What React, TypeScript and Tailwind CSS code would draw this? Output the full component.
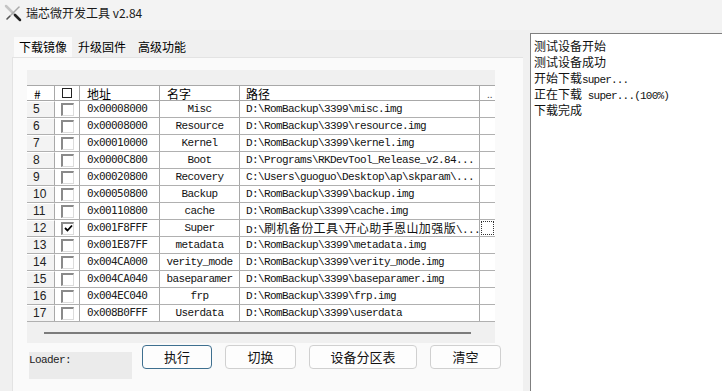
import React from "react";

const cjk = "font-[family-name:'Noto_Sans_CJK_SC',sans-serif]";
const mono = "font-[family-name:'Liberation_Mono','Noto_Sans_CJK_SC',monospace]";
const dmono = "font-[family-name:'DejaVu_Sans_Mono',monospace]";

type Row = { n: string; addr: string; name: string; path: string; checked?: boolean; cjkPath?: boolean; focus?: boolean };

const rows: Row[] = [
  { n: "5", addr: "0x00008000", name: "Misc", path: "D:\\RomBackup\\3399\\misc.img" },
  { n: "6", addr: "0x00008000", name: "Resource", path: "D:\\RomBackup\\3399\\resource.img" },
  { n: "7", addr: "0x00010000", name: "Kernel", path: "D:\\RomBackup\\3399\\kernel.img" },
  { n: "8", addr: "0x0000C800", name: "Boot", path: "D:\\Programs\\RKDevTool_Release_v2.84..." },
  { n: "9", addr: "0x00020800", name: "Recovery", path: "C:\\Users\\guoguo\\Desktop\\ap\\skparam\\..." },
  { n: "10", addr: "0x00050800", name: "Backup", path: "D:\\RomBackup\\3399\\backup.img" },
  { n: "11", addr: "0x00110800", name: "cache", path: "D:\\RomBackup\\3399\\cache.img" },
  { n: "12", addr: "0x001F8FFF", name: "Super", path: "", checked: true, cjkPath: true, focus: true },
  { n: "13", addr: "0x001E87FF", name: "metadata", path: "D:\\RomBackup\\3399\\metadata.img" },
  { n: "14", addr: "0x004CA000", name: "verity_mode", path: "D:\\RomBackup\\3399\\verity_mode.img" },
  { n: "15", addr: "0x004CA040", name: "baseparamer", path: "D:\\RomBackup\\3399\\baseparamer.img" },
  { n: "16", addr: "0x004EC040", name: "frp", path: "D:\\RomBackup\\3399\\frp.img" },
  { n: "17", addr: "0x008B0FFF", name: "Userdata", path: "D:\\RomBackup\\3399\\userdata" },
];

function CheckBox({ checked }: { checked?: boolean }) {
  return (
    <div className="w-[13px] h-[13px] bg-white border-t-2 border-l-2 border-t-[#8a8a8a] border-l-[#8a8a8a] border-b border-r border-b-[#dcdcdc] border-r-[#dcdcdc] flex items-center justify-center">
      {checked && (
        <svg width="9" height="9" viewBox="0 0 9 9">
          <path d="M1 4 L3.5 6.5 L8 1.5" stroke="#000" strokeWidth="1.8" fill="none" />
        </svg>
      )}
    </div>
  );
}

function AppIcon() {
  return (
    <svg width="18" height="18" viewBox="0 0 18 18">
      <path d="M2 2 L14 14" stroke="#c4c4c4" strokeWidth="2.5" strokeLinecap="round" />
      <path d="M15 3 L7 11" stroke="#a8a8a8" strokeWidth="1.5" strokeLinecap="round" />
      <path d="M11 11 L16 16" stroke="#222" strokeWidth="2.5" strokeLinecap="round" />
      <path d="M6 12 L3 15" stroke="#555" strokeWidth="1.6" strokeLinecap="round" />
    </svg>
  );
}

function Btn({ label, w, primary }: { label: string; w: string; primary?: boolean }) {
  return (
    <div
      className={`${w} h-[24px] rounded-[4px] border ${primary ? "border-[#3e6f8f]" : "border-[#d0d0d0]"} bg-[#fdfdfd] flex items-center justify-center text-[13px] text-[#111] ${cjk}`}
    >
      {label}
    </div>
  );
}

export default function App() {
  return (
    <div className="w-[722px] h-[391px] overflow-hidden bg-[#f0f0f0] flex flex-col text-black">
      {/* title bar */}
      <div className="h-[30px] bg-[#f3f3f3] flex items-center pl-[4px] pb-[4px] shrink-0">
        <AppIcon />
        <span className={`ml-[4px] text-[12px] text-[#1a1a1a] ${cjk}`}>瑞芯微开发工具 v2.84</span>
      </div>

      <div className="flex flex-1 min-h-0">
        {/* left area */}
        <div className="w-[530px] shrink-0 flex flex-col pl-[12px] pr-[7px] pt-[7px]">
          {/* tabs */}
          <div className={`flex h-[20px] items-end text-[12px] ${cjk}`}>
            <div className="h-[20px] ml-[2px] w-[58px] bg-[#fafafa] flex items-center justify-center">下载镜像</div>
            <div className="h-[20px] w-[60px] flex items-center justify-center">升级固件</div>
            <div className="h-[20px] w-[60px] flex items-center justify-center">高级功能</div>
          </div>
          {/* tab panel */}
          <div className="flex-1 bg-[#fafafa] border-l border-t border-[#e3e3e3] pl-[14px] pt-[12px] flex flex-col">
            {/* grid */}
            <div className="w-[468px] h-[273px] bg-[#f0f0f0] flex flex-col">
              <div className="h-[15px] shrink-0" />
              {/* header */}
              <div className={`h-[16px] flex bg-white border-t border-b border-[#a8a8a8] text-[12px] leading-[15px] ${cjk}`}>
                <div className="w-[28px] border-r border-[#a8a8a8] pl-[7px]">#</div>
                <div className="w-[25px] border-r border-[#a8a8a8] flex items-center pl-[7px]">
                  <div className="w-[10px] h-[10px] border border-[#222]" />
                </div>
                <div className="w-[80px] border-r border-[#a8a8a8] pl-[7px]">地址</div>
                <div className="w-[80px] border-r border-[#a8a8a8] pl-[7px]">名字</div>
                <div className="w-[240px] border-r border-[#a8a8a8] pl-[6px]">路径</div>
                <div className="w-[15px] pl-[7px] text-[#555] text-[10px]">..</div>
              </div>
              {rows.map((r) => (
                <div key={r.n} className="h-[17px] flex border-b border-[#b0b0b0] bg-white">
                  <div className="w-[28px] bg-[#f3f3f3] border-r border-[#a8a8a8] border-t border-t-white pl-[6px] text-[12px] leading-[15px] text-[#222] font-[family-name:'Liberation_Sans',sans-serif]">
                    {r.n}
                  </div>
                  <div className="w-[25px] border-r border-[#a8a8a8] pl-[6px] flex items-center">
                    <CheckBox checked={r.checked} />
                  </div>
                  <div className={`w-[80px] border-r border-[#a8a8a8] pl-[7px] text-[11px] tracking-[-0.6px] leading-[16px] text-[#222] ${dmono}`}>
                    {r.addr}
                  </div>
                  <div className={`w-[80px] border-r border-[#a8a8a8] text-center text-[11px] tracking-[-0.6px] leading-[16px] text-[#111] ${mono}`}>
                    {r.name}
                  </div>
                  <div className={`w-[240px] border-r border-[#a8a8a8] pl-[6px] text-[11px] tracking-[-0.6px] leading-[16px] text-[#111] whitespace-nowrap overflow-hidden ${mono}`}>
                    {r.cjkPath ? (
                      <span className="leading-[16px]">
                        D:\<span className={`text-[12px] leading-[16px] tracking-[0.4px] ${cjk}`}>刷机备份工具</span>\
                        <span className={`text-[12px] leading-[16px] tracking-[0.4px] ${cjk}`}>开心助手恩山加强版</span>\...
                      </span>
                    ) : (
                      r.path
                    )}
                  </div>
                  <div className="w-[15px] p-[1px]">
                    {r.focus && <div className="w-full h-full border border-dotted border-[#333]" />}
                  </div>
                </div>
              ))}
              {/* scroll area */}
              <div className="flex-1 flex items-center pl-[17px]">
                <div className="w-[427px] h-[2px] bg-[#7c7c7c]" />
              </div>
            </div>
            {/* bottom controls */}
            <div className="flex items-start">
              <div className={`ml-[2px] mt-[9px] w-[103px] h-[27px] bg-[#ebebeb] text-[11px] tracking-[-0.6px] leading-[14px] pt-[1px] text-[#222] ${mono}`}>
                Loader:
              </div>
              <div className="flex mt-[2px] ml-[10px] gap-[13px]">
                <Btn label="执行" w="w-[70px]" primary />
                <Btn label="切换" w="w-[71px]" />
                <Btn label="设备分区表" w="w-[108px]" />
                <Btn label="清空" w="w-[71px]" />
              </div>
            </div>
          </div>
        </div>

        {/* log panel */}
        <div className={`flex-1 mt-[3px] bg-white border-l border-t border-[#7f7f7f] pl-[3px] pt-[4px] text-[12px] text-[#111] ${cjk}`}>
          <div className="h-[16px] leading-[16px]">测试设备开始</div>
          <div className="h-[16px] leading-[16px]">测试设备成功</div>
          <div className="h-[16px] leading-[16px] whitespace-nowrap">
            开始下载<span className={`text-[11px] leading-[16px] tracking-[-0.8px] ${mono}`}>super...</span>
          </div>
          <div className="h-[16px] leading-[16px] whitespace-nowrap">
            正在下载<span className={`text-[11px] leading-[16px] tracking-[-0.8px] ${mono}`}> super...(100%)</span>
          </div>
          <div className="h-[16px] leading-[16px]">下载完成</div>
        </div>
      </div>
    </div>
  );
}
